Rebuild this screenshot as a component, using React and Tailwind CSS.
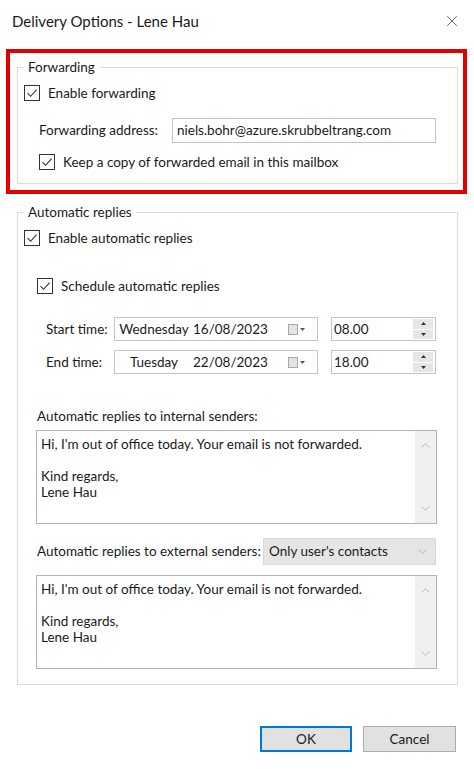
import { X } from "lucide-react";

const font = { fontFamily: 'Lato, "Open Sans", sans-serif' };

function Check({ className = "" }) {
  return (
    <span className={`flex h-[16px] w-[16px] shrink-0 items-center justify-center border border-[#333] bg-white ${className}`}>
      <svg width="12" height="12" viewBox="0 0 12 12" fill="none">
        <path d="M1.5 6.2 L4.6 9.3 L10.6 2.6" stroke="#333" strokeWidth="1.1" />
      </svg>
    </span>
  );
}

function CheckRow({ label, className = "" }) {
  return (
    <div className={`flex h-[16px] items-center gap-[8px] whitespace-nowrap ${className}`}>
      <Check />
      <span>{label}</span>
    </div>
  );
}

function Calendar() {
  return (
    <span className="flex items-center gap-[2px]">
      <span className="h-[11px] w-[10px] border border-[#a8a8a8] bg-[#e4e4e4]" />
      <svg width="5" height="3" viewBox="0 0 5 3">
        <path d="M0 0 H5 L2.5 3 Z" fill="#555" />
      </svg>
    </span>
  );
}

function Spin() {
  return (
    <span className="flex h-[20px] w-[20px] flex-col gap-[1px]">
      <span className="flex flex-1 items-center justify-center bg-[#e6e6e6]">
        <svg width="5" height="3" viewBox="0 0 5 3">
          <path d="M0 3 H5 L2.5 0 Z" fill="#333" />
        </svg>
      </span>
      <span className="flex flex-1 items-center justify-center bg-[#e6e6e6]">
        <svg width="5" height="3" viewBox="0 0 5 3">
          <path d="M0 0 H5 L2.5 3 Z" fill="#333" />
        </svg>
      </span>
    </span>
  );
}

function TimeRow({ label, day, date, time, className = "" }) {
  return (
    <div className={`flex h-[24px] items-center whitespace-nowrap ${className}`}>
      <span className="w-[90px] shrink-0 pl-[22px]">{label}</span>
      <div className="flex h-full w-[204px] shrink-0 items-center border border-[#c4c4c4] pl-[1px] pr-[12px]">
        <span className="w-[76px] text-center">{day}</span>
        <span className="ml-[1px] flex-1">{date}</span>
        <Calendar />
      </div>
      <div className="ml-[13px] flex h-full w-[105px] shrink-0 items-center justify-between border border-[#c4c4c4] pl-[2px] pr-[2px]">
        <span>{time}</span>
        <Spin />
      </div>
    </div>
  );
}

function Chevron({ up }) {
  return (
    <svg width="9" height="5" viewBox="0 0 9 5" fill="none">
      <path d={up ? "M0.5 4.5 L4.5 0.7 L8.5 4.5" : "M0.5 0.5 L4.5 4.3 L8.5 0.5"} stroke="#b8b8b8" strokeWidth="1" />
    </svg>
  );
}

function Message({ className = "" }) {
  return (
    <div className={`flex h-[94px] w-[401px] border border-[#b4b4b4] bg-white ${className}`}>
      <div className="flex-1 pl-[4px] pt-[5px] leading-[16px]">
        <p>Hi, I'm out of office today. Your email is not forwarded.</p>
        <p className="mt-[16px]">Kind regards,</p>
        <p>Lene Hau</p>
      </div>
      <div className="flex w-[21px] flex-col items-center justify-between bg-[#f0f0f0] py-[12px]">
        <Chevron up />
        <Chevron />
      </div>
    </div>
  );
}

export default function App() {
  return (
    <div className="h-[769px] w-[474px] overflow-hidden bg-white text-[13.5px] text-[#1a1a1a]" style={font}>
      <div className="flex h-[49px] items-start justify-between pl-[12px] pr-[13px] pt-[10px]">
        <span className="text-[15px]">Delivery Options - Lene Hau</span>
        <X size={18} strokeWidth={1} className="mt-[2px] text-[#333]" />
      </div>

      <div className="ml-[6px] w-[461px] border-4 border-[#e30000] pb-[6px] pl-[7px] pr-[5px] pt-[5px]">
        <fieldset className="border border-[#dcdcdc] px-[6px] pb-[13px]">
          <legend className="px-[4px] leading-[18px]">Forwarding</legend>
          <CheckRow label="Enable forwarding" className="mt-[9px]" />
          <div className="mt-[17px] flex h-[25px] items-center whitespace-nowrap">
            <span className="w-[148px] shrink-0 pl-[15px]">Forwarding address:</span>
            <div className="flex h-full w-[264px] shrink-0 items-center border border-[#c4c4c4] pl-[4px]">
              niels.bohr@azure.skrubbeltrang.com
            </div>
          </div>
          <CheckRow label="Keep a copy of forwarded email in this mailbox" className="ml-[15px] mt-[11px]" />
        </fieldset>
      </div>

      <fieldset className="ml-[17px] mt-[9px] w-[441px] border border-[#dcdcdc] px-[6px] pb-[15px]">
        <legend className="px-[4px] leading-[18px]">Automatic replies</legend>
        <CheckRow label="Enable automatic replies" className="mt-[9px]" />
        <CheckRow label="Schedule automatic replies" className="ml-[13px] mt-[32px]" />
        <TimeRow label="Start time:" day="Wednesday" date="16/08/2023" time="08.00" className="mt-[23px]" />
        <TimeRow label="End time:" day="Tuesday" date="22/08/2023" time="18.00" className="mt-[9px]" />
        <p className="ml-[13px] mt-[33px] leading-[18px]">Automatic replies to internal senders:</p>
        <Message className="ml-[12px] mt-[5px]" />
        <div className="ml-[13px] mt-[14px] flex h-[27px] w-[399px] items-center justify-between whitespace-nowrap">
          <span>Automatic replies to external senders:</span>
          <div className="flex h-full w-[173px] shrink-0 items-center justify-between border border-[#d9d9d9] bg-[#e5e5e5] pl-[5px] pr-[8px]">
            <span>Only user's contacts</span>
            <Chevron />
          </div>
        </div>
        <Message className="ml-[12px] mt-[10px]" />
      </fieldset>

      <div className="mt-[41px] flex justify-end gap-[11px] pr-[18px]">
        <button className="h-[26px] w-[92px] border-2 border-[#0078d7] bg-[#e1e1e1]">OK</button>
        <button className="h-[26px] w-[93px] border border-[#adadad] bg-[#e1e1e1]">Cancel</button>
      </div>
    </div>
  );
}
